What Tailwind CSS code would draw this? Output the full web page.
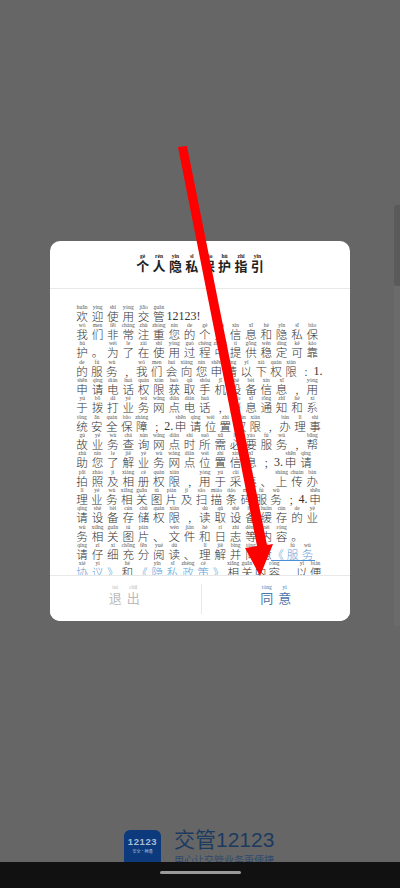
<!DOCTYPE html>
<html lang="zh"><head><meta charset="utf-8">
<script src="https://cdn.jsdelivr.net/npm/@tailwindcss/browser@4"></script>
</head>
<body class="m-0">
<div class="relative w-[400px] h-[888px] overflow-hidden bg-[#666666] font-['Noto_Sans_CJK_SC','Noto_Sans',sans-serif]">
  <!-- right edge strips -->
  <div class="absolute right-0 top-[205px] w-[6px] h-[81px] bg-[#5a5a5a] rounded-l-[3px]"></div>
  <div class="absolute right-0 top-[286px] w-[6px] h-[340px] bg-[#6b6b6b]"></div>

  <!-- dialog -->
  <div class="absolute left-[50px] top-[241px] w-[300px] h-[380px] bg-white rounded-[10px] overflow-hidden flex flex-col">
    <div class="h-[48px] shrink-0 border-b border-[#e8e8e8] flex justify-center items-start pt-[13px] text-[13px] font-bold text-[#222] [&>span]:flex [&>span]:flex-col [&>span]:items-center [&>span]:w-[16.4px] [&>span]:leading-[14px] [&_b]:text-[5.5px] [&_b]:leading-[5px] [&_b]:font-bold [&_b]:whitespace-nowrap [&_b]:font-['Liberation_Serif']">
      <span><b>gè</b>个</span><span><b>rén</b>人</span><span><b>yǐn</b>隐</span><span><b>sī</b>私</span><span><b>bǎo</b>保</span><span><b>hù</b>护</span><span><b>zhǐ</b>指</span><span><b>yǐn</b>引</span>
    </div>
    <div class="flex-1 overflow-hidden pl-[24.5px] pt-[14.5px] text-[11.6px] font-light text-[#333] [&>div]:flex [&>div]:w-[248px] [&>div]:h-[18.33px] [&_span]:flex [&_span]:flex-col [&_span]:justify-end [&_span]:items-center [&_span]:w-[15.35px] [&_span]:min-w-0 [&_span]:leading-[12px] [&_b]:text-[5.5px] [&_b]:leading-[6px] [&_b]:font-normal [&_b]:whitespace-nowrap [&_b]:text-[#555] [&_b]:font-['Liberation_Serif'] [&_em]:not-italic [&_em]:shrink-0 [&_em]:self-end [&_em]:leading-[12px] [&_em]:text-[12px] [&_em]:font-['Liberation_Serif']">
      <div><span><b>huān</b>欢</span><span><b>yíng</b>迎</span><span><b>shǐ</b>使</span><span><b>yòng</b>用</span><span><b>jiāo</b>交</span><span><b>guǎn</b>管</span><em>12123!</em></div>
      <div><span><b>wǒ</b>我</span><span><b>men</b>们</span><span><b>fēi</b>非</span><span><b>cháng</b>常</span><span><b>zhù</b>注</span><span><b>zhòng</b>重</span><span><b>nín</b>您</span><span><b>de</b>的</span><span><b>gè</b>个</span><span><b>rén</b>人</span><span><b>xìn</b>信</span><span><b>xī</b>息</span><span><b>hé</b>和</span><span><b>yǐn</b>隐</span><span><b>sī</b>私</span><span><b>bǎo</b>保</span></div>
      <div><span><b>hù</b>护</span><span>。</span><span><b>wèi</b>为</span><span><b>le</b>了</span><span><b>zài</b>在</span><span><b>shǐ</b>使</span><span><b>yòng</b>用</span><span><b>guò</b>过</span><span><b>chéng</b>程</span><span><b>zhōng</b>中</span><span><b>tí</b>提</span><span><b>gōng</b>供</span><span><b>wěn</b>稳</span><span><b>dìng</b>定</span><span><b>kě</b>可</span><span><b>kào</b>靠</span></div>
      <div><span><b>de</b>的</span><span><b>fú</b>服</span><span><b>wù</b>务</span><span>,</span><span><b>wǒ</b>我</span><span><b>men</b>们</span><span><b>huì</b>会</span><span><b>xiàng</b>向</span><span><b>nín</b>您</span><span><b>shēn</b>申</span><span><b>qǐng</b>请</span><span><b>yǐ</b>以</span><span><b>xià</b>下</span><span><b>quán</b>权</span><span><b>xiàn</b>限</span><span>:</span><em>1.</em></div>
      <div><span><b>shēn</b>申</span><span><b>qǐng</b>请</span><span><b>diàn</b>电</span><span><b>huà</b>话</span><span><b>quán</b>权</span><span><b>xiàn</b>限</span><span><b>huò</b>获</span><span><b>qǔ</b>取</span><span><b>shǒu</b>手</span><span><b>jī</b>机</span><span><b>shè</b>设</span><span><b>bèi</b>备</span><span><b>xìn</b>信</span><span><b>xī</b>息</span><span>,</span><span><b>yòng</b>用</span></div>
      <div><span><b>yú</b>于</span><span><b>bō</b>拨</span><span><b>dǎ</b>打</span><span><b>yè</b>业</span><span><b>wù</b>务</span><span><b>wǎng</b>网</span><span><b>diǎn</b>点</span><span><b>diàn</b>电</span><span><b>huà</b>话</span><span>,</span><span><b>xiāo</b>消</span><span><b>xī</b>息</span><span><b>tōng</b>通</span><span><b>zhī</b>知</span><span><b>hé</b>和</span><span><b>xì</b>系</span></div>
      <div><span><b>tǒng</b>统</span><span><b>ān</b>安</span><span><b>quán</b>全</span><span><b>bǎo</b>保</span><span><b>zhàng</b>障</span><span>;</span><em>2.</em><span><b>shēn</b>申</span><span><b>qǐng</b>请</span><span><b>wèi</b>位</span><span><b>zhì</b>置</span><span><b>quán</b>权</span><span><b>xiàn</b>限</span><span>,</span><span><b>bàn</b>办</span><span><b>lǐ</b>理</span><span><b>shì</b>事</span></div>
      <div><span><b>gù</b>故</span><span><b>yè</b>业</span><span><b>wù</b>务</span><span><b>chá</b>查</span><span><b>xún</b>询</span><span><b>wǎng</b>网</span><span><b>diǎn</b>点</span><span><b>shí</b>时</span><span><b>suǒ</b>所</span><span><b>xū</b>需</span><span><b>bì</b>必</span><span><b>yào</b>要</span><span><b>fú</b>服</span><span><b>wù</b>务</span><span>,</span><span><b>bāng</b>帮</span></div>
      <div><span><b>zhù</b>助</span><span><b>nín</b>您</span><span><b>le</b>了</span><span><b>jiě</b>解</span><span><b>yè</b>业</span><span><b>wù</b>务</span><span><b>wǎng</b>网</span><span><b>diǎn</b>点</span><span><b>wèi</b>位</span><span><b>zhì</b>置</span><span><b>xìn</b>信</span><span><b>xī</b>息</span><span>;</span><em>3.</em><span><b>shēn</b>申</span><span><b>qǐng</b>请</span></div>
      <div><span><b>pāi</b>拍</span><span><b>zhào</b>照</span><span><b>jí</b>及</span><span><b>xiàng</b>相</span><span><b>cè</b>册</span><span><b>quán</b>权</span><span><b>xiàn</b>限</span><span>,</span><span><b>yòng</b>用</span><span><b>yú</b>于</span><span><b>cǎi</b>采</span><span><b>jí</b>集</span><span>、</span><span><b>shàng</b>上</span><span><b>chuán</b>传</span><span><b>bàn</b>办</span></div>
      <div><span><b>lǐ</b>理</span><span><b>yè</b>业</span><span><b>wù</b>务</span><span><b>xiāng</b>相</span><span><b>guān</b>关</span><span><b>tú</b>图</span><span><b>piàn</b>片</span><span><b>jí</b>及</span><span><b>sǎo</b>扫</span><span><b>miáo</b>描</span><span><b>tiáo</b>条</span><span><b>mǎ</b>码</span><span><b>fú</b>服</span><span><b>wù</b>务</span><span>;</span><em>4.</em><span><b>shēn</b>申</span></div>
      <div><span><b>qǐng</b>请</span><span><b>shè</b>设</span><span><b>bèi</b>备</span><span><b>cún</b>存</span><span><b>chǔ</b>储</span><span><b>quán</b>权</span><span><b>xiàn</b>限</span><span>,</span><span><b>dú</b>读</span><span><b>qǔ</b>取</span><span><b>shè</b>设</span><span><b>bèi</b>备</span><span><b>huǎn</b>缓</span><span><b>cún</b>存</span><span><b>de</b>的</span><span><b>yè</b>业</span></div>
      <div><span><b>wù</b>务</span><span><b>xiāng</b>相</span><span><b>guān</b>关</span><span><b>tú</b>图</span><span><b>piàn</b>片</span><span>、</span><span><b>wén</b>文</span><span><b>jiàn</b>件</span><span><b>hé</b>和</span><span><b>rì</b>日</span><span><b>zhì</b>志</span><span><b>děng</b>等</span><span><b>nèi</b>内</span><span><b>róng</b>容</span><span>。</span></div>
      <div><span><b>qǐng</b>请</span><span><b>zǐ</b>仔</span><span><b>xì</b>细</span><span><b>chōng</b>充</span><span><b>fēn</b>分</span><span><b>yuè</b>阅</span><span><b>dú</b>读</span><span>、</span><span><b>lǐ</b>理</span><span><b>jiě</b>解</span><span><b>bìng</b>并</span><span><b>tóng</b>同</span><span><b>yì</b>意</span><u class="flex shrink-0 w-[44px] -ml-[3px] no-underline border-b border-[#4a90d9] text-[#5a9fdc] h-[19px]"><span class="w-[14px]!">《</span><span class="w-[15px]!"><b>fú</b>服</span><span class="w-[15px]!"><b>wù</b>务</span></u></div>
      <div><u class="flex no-underline text-[#5a9fdc]"><span><b>xié</b>协</span><span><b>yì</b>议</span><span>》</span></u><span><b>hé</b>和</span><u class="flex no-underline text-[#5a9fdc]"><span>《</span><span><b>yǐn</b>隐</span><span><b>sī</b>私</span><span><b>zhèng</b>政</span><span><b>cè</b>策</span><span>》</span></u><span><b>xiāng</b>相</span><span><b>guān</b>关</span><span><b>nèi</b>内</span><span><b>róng</b>容</span><span>,</span><span><b>yǐ</b>以</span><span><b>biàn</b>便</span></div>
    </div>
    <div class="h-[46px] shrink-0 border-t border-[#e8e8e8] flex items-start pt-[8px] bg-white">
      <div class="flex-1 flex justify-center pr-[2px] text-[13px] text-[#bbb] [&>span]:flex [&>span]:flex-col [&>span]:items-center [&>span]:w-[18px] [&>span]:leading-[16px] [&_b]:text-[5.5px] [&_b]:leading-[6px] [&_b]:font-normal [&_b]:font-['Liberation_Serif']"><span><b>tuì</b>退</span><span><b>chū</b>出</span></div>
      <div class="w-px h-[30px] bg-[#e8e8e8]"></div>
      <div class="flex-1 flex justify-center text-[13px] text-[#4a76ad] [&>span]:flex [&>span]:flex-col [&>span]:items-center [&>span]:w-[18px] [&>span]:leading-[16px] [&_b]:text-[5.5px] [&_b]:leading-[6px] [&_b]:font-normal [&_b]:font-['Liberation_Serif']"><span><b>tóng</b>同</span><span><b>yì</b>意</span></div>
    </div>
  </div>

  <!-- brand at bottom -->
  <div class="absolute left-[124px] top-[830px] flex gap-[13px]">
    <div class="w-[37px] h-[37px] rounded-[6px] bg-[#0c3a7c] flex flex-col items-center pt-[7px] text-[#a9bdd8]">
      <div class="text-[9.5px] leading-[10px] font-bold tracking-[0.6px] font-['Liberation_Sans']">12123</div>
      <div class="text-[4px] leading-[6px] mt-[1px]">安全·畅通</div>
    </div>
    <div class="-mt-[3px]">
      <div class="text-[21px] leading-[26px] text-[#1c3a60] font-['Liberation_Sans','Noto_Sans_CJK_SC']">交管12123</div>
      <div class="text-[10px] leading-[14px] text-[#2e4a6d]">用心让交管业务更便捷</div>
    </div>
  </div>

  <!-- nav bar -->
  <div class="absolute left-0 right-0 top-[862px] h-[26px] bg-[#111111] flex justify-center">
    <div class="mt-[9px] w-[81px] h-[3px] rounded-full bg-[#999999]"></div>
  </div>

  <!-- red arrow annotation -->
  <svg class="absolute left-0 top-0 pointer-events-none" width="400" height="888" viewBox="0 0 400 888">
    <polygon fill="#fe0000" points="178,147 187,146 267,545 273,544 260,576 245,548 257,546"/>
  </svg>
</div>
</body></html>
